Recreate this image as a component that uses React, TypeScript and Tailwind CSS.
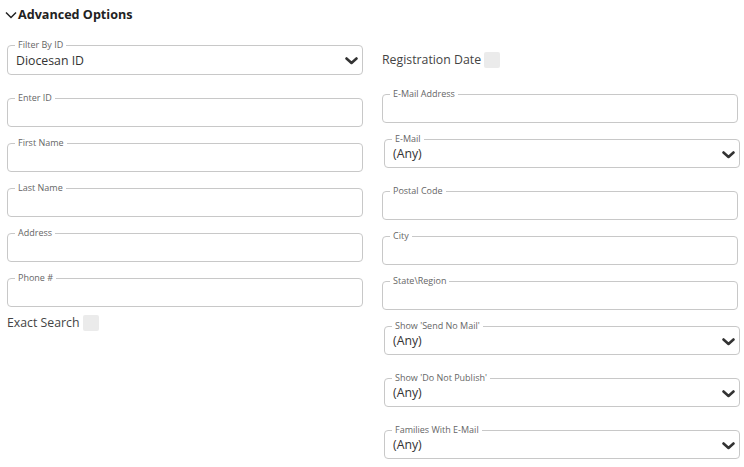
import React from 'react';

const font = { fontFamily: '"Open Sans", "Noto Sans", sans-serif' };

function Chevron() {
  return (
    <svg width="13" height="8" viewBox="0 0 13 8" className="shrink-0">
      <polyline points="1.5,1.5 6.5,6 11.5,1.5" fill="none" stroke="#333" strokeWidth="2.6" strokeLinecap="round" strokeLinejoin="round" />
    </svg>
  );
}

function TextField({ label }: { label: string }) {
  return (
    <fieldset className="border border-[#c8c8c8] rounded-[4px] px-[7px] mb-[11px]">
      <legend className="px-[3px] text-[9px] leading-[10px] text-[#666]">{label}</legend>
      <div className="h-[23px]" />
    </fieldset>
  );
}

function SelectField({ label, value, tall, className = '' }: { label: string; value: string; tall?: boolean; className?: string }) {
  return (
    <fieldset className={`border border-[#c8c8c8] rounded-[4px] pl-[7px] pr-[4px] mb-[18px] ${className}`}>
      <legend className="px-[3px] text-[9px] leading-[10px] text-[#666]">{label}</legend>
      <div className={`flex items-center justify-between pl-[1px] pb-[2px] ${tall ? 'h-[24px]' : 'h-[23px]'}`}>
        <span className="text-[12.3px] text-[#333]">{value}</span>
        <Chevron />
      </div>
    </fieldset>
  );
}

function CheckRow({ label, className = '' }: { label: string; className?: string }) {
  return (
    <div className={`flex items-center gap-[3px] ${className}`}>
      <span className="text-[12.3px] text-[#444]">{label}</span>
      <span className="w-[16px] h-[16px] rounded-[2px] bg-[#ebebeb]" />
    </div>
  );
}

export default function App() {
  return (
    <div className="w-[744px] h-[467px] bg-white overflow-hidden pl-[7px] pr-[6px]" style={font}>
      <div className="h-[30px] flex items-center gap-[1px] -ml-[2px]">
        <svg width="12" height="8" viewBox="0 0 12 8">
          <polyline points="1,1.5 6,6.5 11,1.5" fill="none" stroke="#222" strokeWidth="1.5" />
        </svg>
        <span className="text-[12.6px] font-bold text-[#222]">Advanced Options</span>
      </div>

      <div className="grid grid-cols-2 gap-x-[19px] mt-[10px]">
        <div className="flex flex-col">
          <SelectField label="Filter By ID" value="Diocesan ID" tall />
          <TextField label="Enter ID" />
          <TextField label="First Name" />
          <TextField label="Last Name" />
          <TextField label="Address" />
          <TextField label="Phone #" />
          <CheckRow label="Exact Search" className="h-[24px] -mt-[7px]" />
        </div>

        <div className="flex flex-col">
          <CheckRow label="Registration Date" className="h-[40px] mb-[9px]" />
          <TextField label="E-Mail Address" />
          <SelectField label="E-Mail" value="(Any)" className="ml-[2px] -mr-[2px]" />
          <TextField label="Postal Code" />
          <TextField label="City" />
          <TextField label="State\Region" />
          <SelectField label="Show 'Send No Mail'" value="(Any)" className="ml-[2px] -mr-[2px]" />
          <SelectField label="Show 'Do Not Publish'" value="(Any)" className="ml-[2px] -mr-[2px]" />
          <SelectField label="Families With E-Mail" value="(Any)" className="ml-[2px] -mr-[2px]" />
        </div>
      </div>
    </div>
  );
}
